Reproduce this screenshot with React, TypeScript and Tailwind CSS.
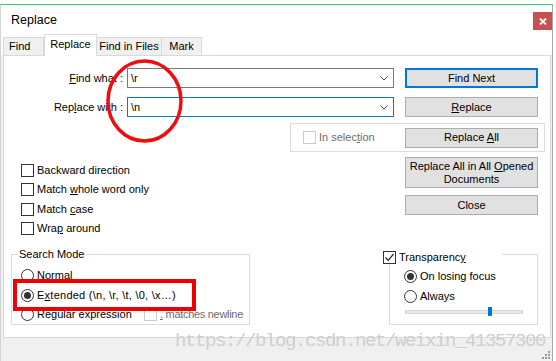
import type { ReactNode } from "react";

const font = { fontFamily: '"Liberation Sans", Arial, sans-serif' };

function Check({ checked = false, disabled = false }: { checked?: boolean; disabled?: boolean }) {
  return (
    <span
      className={`relative flex w-[13px] h-[13px] shrink-0 items-center justify-center border bg-white ${
        disabled ? "border-[#cccccc]" : "border-[#333333]"
      }`}
    >
      {checked && (
        <svg width="11" height="11" viewBox="0 0 11 11">
          <path d="M1.5 5.5 L4.2 8.3 L9.5 2" fill="none" stroke="#222" strokeWidth="1.2" />
        </svg>
      )}
    </span>
  );
}

function Radio({ on = false }: { on?: boolean }) {
  return (
    <span className="flex w-[13px] h-[13px] shrink-0 items-center justify-center rounded-full border border-[#333333] bg-white">
      {on && <span className="w-[7px] h-[7px] rounded-full bg-[#333333]" />}
    </span>
  );
}

function Btn({ children, className = "" }: { children: ReactNode; className?: string }) {
  return (
    <div
      className={`flex w-[133px] shrink-0 items-center justify-center bg-[#e1e1e1] text-center text-[11px] leading-[13px] text-black ${className}`}
    >
      {children}
    </div>
  );
}

function Combo({ value, border }: { value: string; border: string }) {
  return (
    <div className={`ml-[4px] flex h-[20px] w-[267px] items-center justify-between border bg-white pl-[3px] pr-[5px] ${border}`}>
      <span className="text-[11px] text-black">{value}</span>
      <svg width="8" height="5" viewBox="0 0 8 5">
        <path d="M0.5 0.5 L4 4 L7.5 0.5" fill="none" stroke="#444" strokeWidth="1" />
      </svg>
    </div>
  );
}

function Opt({ children, className = "" }: { children: ReactNode; className?: string }) {
  return (
    <div className={`flex h-[13px] items-center gap-[3px] whitespace-nowrap text-[11px] text-black ${className}`}>
      {children}
    </div>
  );
}

export default function App() {
  return (
    <div className="relative h-[361px] w-[556px] overflow-hidden bg-white" style={font}>
      <div className="mt-[4px] flex h-[357px] w-[553px] flex-col border-l border-r border-t border-l-[#d4d4d4] border-r-[#a8a8a8] border-t-[#2bcb6c]">
        {/* title bar */}
        <div className="flex h-[30px] shrink-0 items-start justify-between">
          <span className="pl-[10px] pt-[8px] text-[12.5px] leading-[15px] text-black">Replace</span>
          <div className="mt-[7px] flex h-[18px] w-[19px] items-center justify-center bg-[#c75050]">
            <svg width="8" height="7" viewBox="0 0 8 7">
              <path d="M1 0.5 L7 6.5 M7 0.5 L1 6.5" stroke="#fff" strokeWidth="1.8" />
            </svg>
          </div>
        </div>

        {/* tabs */}
        <div className="flex h-[20px] shrink-0 items-end pl-[2px] text-[11px] text-black">
          <div className="flex h-[18px] w-[41px] items-center border border-b-0 border-[#d9d9d9] bg-[#f0f0f0] pl-[5px]">Find</div>
          <div className="relative z-10 -mb-px flex h-[22px] w-[53px] items-center justify-center border border-b-0 border-[#d9d9d9] bg-white pb-[2px]">
            Replace
          </div>
          <div className="flex h-[18px] w-[65px] items-center justify-center border border-b-0 border-l-0 border-[#d9d9d9] bg-[#f0f0f0]">
            Find in Files
          </div>
          <div className="flex h-[18px] w-[40px] items-center justify-center border border-b-0 border-l-0 border-[#d9d9d9] bg-[#f0f0f0]">
            Mark
          </div>
        </div>

        <div className="flex flex-1 flex-col bg-[#f0f0f0]">
          {/* panel */}
          <div className="ml-[2px] h-[283px] w-[548px] shrink-0 border border-[#d9d9d9] bg-white text-[11px] text-black">
            <div className="mt-[12px] flex h-[20px] items-center">
              <span className="w-[119px] text-right">
                <span className="underline">F</span>ind what :
              </span>
              <Combo value="\r" border="border-[#7a7a7a]" />
              <Btn className="ml-[11px] h-[20px] border-2 border-[#0078d7]">Find Next</Btn>
            </div>

            <div className="mt-[9px] flex h-[20px] items-center">
              <span className="w-[119px] text-right">
                Rep<span className="underline">l</span>ace with :
              </span>
              <Combo value="\n" border="border-[#0078d7]" />
              <Btn className="ml-[11px] h-[20px] border border-[#adadad]">
                <span>
                  <span className="underline">R</span>eplace
                </span>
              </Btn>
            </div>

            <div className="ml-[286px] mt-[6px] flex h-[29px] w-[255px] items-center border border-[#dcdcdc]">
              <div className="ml-[12px] flex items-center gap-[3px] text-[#6d6d6d]">
                <Check disabled />
                <span>
                  In selec<span className="underline">t</span>ion
                </span>
              </div>
              <Btn className="ml-auto mr-[6px] h-[20px] border border-[#adadad]">
                <span>
                  Replace <span className="underline">A</span>ll
                </span>
              </Btn>
            </div>

            <div className="flex">
              <div className="flex flex-col pl-[17px] pt-[12px]">
                <Opt>
                  <Check />
                  <span>Backward direction</span>
                </Opt>
                <Opt className="mt-[6px]">
                  <Check />
                  <span>
                    Match <span className="underline">w</span>hole word only
                  </span>
                </Opt>
                <Opt className="mt-[7px]">
                  <Check />
                  <span>
                    Match <span className="underline">c</span>ase
                  </span>
                </Opt>
                <Opt className="mt-[6px]">
                  <Check />
                  <span>
                    Wra<span className="underline">p</span> around
                  </span>
                </Opt>
              </div>
              <div className="ml-auto mr-[12px] flex flex-col pt-[5px]">
                <Btn className="h-[31px] border border-[#adadad]">
                  <span>
                    Replace All in All <span className="underline">O</span>pened
                    <br />
                    Documents
                  </span>
                </Btn>
                <Btn className="mt-[7px] h-[20px] border border-[#adadad]">Close</Btn>
              </div>
            </div>

            <div className="mt-[12px] flex items-start">
              <fieldset className="ml-[7px] h-[78px] w-[239px] shrink-0 border border-[#dcdcdc]">
                <legend className="ml-[5px] px-[2px] text-[11px] leading-[14px]">Search Mode</legend>
                <div className="ml-[9px] mt-[8px] flex flex-col">
                  <Opt>
                    <Radio />
                    <span>
                      <span className="underline">N</span>ormal
                    </span>
                  </Opt>
                  <Opt className="mt-[7px]">
                    <Radio on />
                    <span className="tracking-[0.25px]">
                      E<span className="underline">x</span>tended (\n, \r, \t, \0, \x…)
                    </span>
                  </Opt>
                  <Opt className="mt-[6px]">
                    <Radio />
                    <span className="w-[104px] shrink-0">
                      Re<span className="underline">g</span>ular expression
                    </span>
                    <Check disabled />
                    <span className="shrink-0 tracking-[-0.3px] text-[#6d6d6d]">
                      <span className="underline">.</span> matches newline
                    </span>
                  </Opt>
                </div>
              </fieldset>

              <fieldset className="ml-[139px] h-[78px] w-[149px] shrink-0 border border-[#dcdcdc]">
                <legend className="-ml-[7px] h-[14px] w-[119px] text-[11px] leading-[14px]">
                  <span className="relative top-[3px] flex items-center gap-[3px] bg-white">
                    <Check checked />
                    <span>
                      Transparenc<span className="underline">y</span>
                    </span>
                  </span>
                </legend>
                <div className="ml-[14px] mt-[9px] flex flex-col">
                  <Opt>
                    <Radio on />
                    <span>On losing focus</span>
                  </Opt>
                  <Opt className="mt-[7px]">
                    <Radio />
                    <span>Always</span>
                  </Opt>
                  <div className="relative ml-px mt-[7px] h-[4px] w-[118px] border border-[#d6d6d6] bg-[#e7eaea]">
                    <span className="absolute left-[82px] top-[-4px] h-[9px] w-[4px] bg-[#0078d7]" />
                  </div>
                </div>
              </fieldset>
            </div>
          </div>
          <div className="flex flex-1 items-end justify-end pb-[2px] pr-[1px]">
            <svg width="9" height="8" viewBox="0 0 9 8">
              <g fill="#9a9a9a">
                <rect x="6" y="0" width="2" height="2" />
                <rect x="3" y="3" width="2" height="2" />
                <rect x="6" y="3" width="2" height="2" />
                <rect x="0" y="6" width="2" height="2" />
                <rect x="3" y="6" width="2" height="2" />
                <rect x="6" y="6" width="2" height="2" />
              </g>
            </svg>
          </div>
        </div>
      </div>

      {/* annotations over the dialog */}
      <svg className="absolute left-[106px] top-[59px]" width="77" height="84" viewBox="0 0 77 84">
        <ellipse cx="38.5" cy="42" rx="36.5" ry="40" fill="none" stroke="#f00d0d" strokeWidth="3.5" />
      </svg>
      <div className="absolute left-[13px] top-[279px] h-[32px] w-[183px] border-[4px] border-[#f00000]" />

      <div
        className="absolute left-[175px] top-[332px] whitespace-nowrap text-[19px] leading-none tracking-[-1.4px] text-[#cfcfcf]"
        style={{ fontFamily: '"Liberation Mono", "Courier New", monospace' }}
      >
        https://blog.csdn.net/weixin_41357300
      </div>
    </div>
  );
}
